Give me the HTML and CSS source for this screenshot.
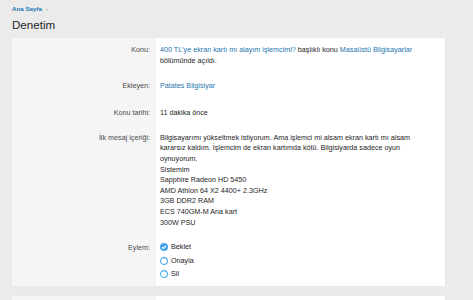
FILE: index.html
```html
<!DOCTYPE html>
<html>
<head>
<meta name="viewport" content="width=device-width, initial-scale=1">
<link rel="stylesheet" href="styles.css">
</head>
<body>

<div class="crumbs"><a href="#">Ana Sayfa</a> <span class="sep">›</span></div>
<h1 class="title">Denetim</h1>

<div class="block">
  <div class="row">
    <div class="label">Konu:</div>
    <div class="value"><a href="#">400 TL'ye ekran kartı mı alayım işlemcimi?</a> başlıklı konu <a href="#">Masaüstü Bilgisayarlar</a><br>bölümünde açıldı.</div>
  </div>
  <div class="row">
    <div class="label">Ekleyen:</div>
    <div class="value"><a href="#">Patates Bilgisiyar</a></div>
  </div>
  <div class="row">
    <div class="label">Konu tarihi:</div>
    <div class="value">11 dakika önce</div>
  </div>
  <div class="row">
    <div class="label">İlk mesaj içeriği:</div>
    <div class="value">Bilgisayarımı yükseltmek istiyorum. Ama işlemci mi alsam ekran kartı mı alsam<br>
      kararsız kaldım. İşlemcim de ekran kartımda kötü. Bilgisiyarda sadece oyun<br>
      oynuyorum.<br>
      Sistemim<br>
      Sapphire Radeon HD 5450<br>
      AMD Athlon 64 X2 4400+ 2.3GHz<br>
      3GB DDR2 RAM<br>
      ECS 740GM-M Ana kart<br>
      300W PSU</div>
  </div>
  <div class="row">
    <div class="label">Eylem:</div>
    <div class="value">
      <label class="choice">
        <svg width="8" height="8" viewBox="0 0 8 8"><circle cx="4" cy="4" r="4" fill="#47a7eb"/><path d="M2.1 4.1 L3.4 5.4 L5.9 2.8" fill="none" stroke="#fff" stroke-width="1.1"/></svg>
        Beklet
      </label>
      <label class="choice">
        <svg width="8" height="8" viewBox="0 0 8 8"><circle cx="4" cy="4" r="3.4" fill="#fff" stroke="#47a7eb" stroke-width="1.1"/></svg>
        Onayla
      </label>
      <label class="choice">
        <svg width="8" height="8" viewBox="0 0 8 8"><circle cx="4" cy="4" r="3.4" fill="#fff" stroke="#47a7eb" stroke-width="1.1"/></svg>
        Sil
      </label>
    </div>
  </div>
</div>

<div class="block">
  <div class="row">
    <div class="label">&nbsp;</div>
    <div class="value">&nbsp;</div>
  </div>
</div>

</body>
</html>
```

FILE: styles.css
```css
body {
  margin: 0;
  background-color: #ebebeb;
  color: #1e1e1e;
  font-family: "Liberation Sans", Arial, sans-serif;
  font-size: 7.2px;
  line-height: 10.6px;
}

a {
  color: #2577b1;
  text-decoration: none;
}

/* breadcrumb */
.crumbs {
  padding: 4px 12px 0;
  font-size: 6.2px;
  line-height: 10px;
  font-weight: bold;
}

.crumbs .sep {
  color: #a0a0a0;
  font-weight: normal;
  margin-left: 2px;
}

.title {
  margin: 2px 12px 5px;
  font-size: 11.6px;
  line-height: 17px;
  font-weight: normal;
}

/* the form block */
.block {
  margin: 0 28px 10px 12px;
  background-color: #fff;
  box-shadow: 0 0 1px rgba(0, 0, 0, 0.08);
}

.row {
  display: grid;
  grid-template-columns: 144px 1fr;
}

.label {
  background-color: #f5f5f5;
  color: #4a4a4a;
  text-align: right;
  padding: 7px 6px 7.5px 0;
}

.value {
  padding: 7px 4px 7.5px;
}

.row:nth-child(3) .label,
.row:nth-child(3) .value {
  padding-top: 9px;
}

.choice {
  display: flex;
  align-items: center;
  gap: 3px;
  height: 13.5px;
}

.row:last-child .value {
  padding-top: 5px;
  padding-bottom: 5px;
}

.row:last-child .label {
  padding-top: 7px;
}
```
